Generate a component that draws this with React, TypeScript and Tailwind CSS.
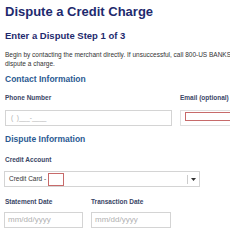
import React from "react";

export default function App() {
  return (
    <div className="w-[230px] h-[230px] overflow-hidden bg-white pl-[5px] pt-[3px]" style={{ fontFamily: '"Liberation Sans", Arial, sans-serif' }}>
      <h1 className="text-[13px] leading-[18px] font-bold text-[#1e2a6e] whitespace-nowrap">Dispute a Credit Charge</h1>
      <h2 className="mt-[9px] text-[9.5px] leading-[12px] font-bold text-[#1e2a6e] whitespace-nowrap">Enter a Dispute Step 1 of 3</h2>
      <p className="mt-[8px] text-[6.5px] leading-[9px] text-[#333] w-[250px]">
        Begin by contacting the merchant directly. If unsuccessful, call 800-US BANKS to dispute a charge.
      </p>
      <h3 className="mt-[5px] text-[8.5px] leading-[12px] font-bold text-[#2b5a92] whitespace-nowrap">Contact Information</h3>
      <div className="mt-[9px] flex gap-[8px]">
        <div className="flex flex-col w-[167px] shrink-0">
          <label className="text-[6.5px] leading-[8px] font-bold text-[#3a4666]">Phone Number</label>
          <div className="mt-[8px] h-[16px] border border-[#d4d4d4] bg-white flex items-center px-[5px] text-[6.5px] text-[#b0b0b0]">( &nbsp;)___-____</div>
        </div>
        <div className="flex flex-col w-[60px] shrink-0">
          <label className="text-[6.5px] leading-[8px] font-bold text-[#3a4666] whitespace-nowrap">Email (optional)</label>
          <div className="mt-[8px] h-[16px] border border-[#e0e0e0] pl-[4px] pt-[1px] pb-[4px]">
            <div className="h-full border border-[#c76a6a]"></div>
          </div>
        </div>
      </div>
      <h3 className="mt-[7px] text-[8.5px] leading-[12px] font-bold text-[#2b5a92] whitespace-nowrap">Dispute Information</h3>
      <label className="mt-[11px] block text-[6.5px] leading-[8px] font-bold text-[#3a4666]">Credit Account</label>
      <div className="mt-[7px] -ml-px w-[196px] h-[16px] border border-[#d4d4d4] flex items-center">
        <span className="pl-[4px] text-[6.5px] text-[#333] whitespace-nowrap">Credit Card -</span>
        <div className="ml-[2px] w-[16px] h-[13px] border border-[#c76a6a]"></div>
        <div className="flex-1"></div>
        <div className="w-px h-[9px] bg-[#ccc]"></div>
        <div className="w-[11px] flex justify-center">
          <svg width="5" height="3" viewBox="0 0 5 3"><path d="M0 0H5L2.5 3Z" fill="#333" /></svg>
        </div>
      </div>
      <div className="mt-[11px] flex gap-[8px]">
        <div className="flex flex-col w-[79px] -ml-px">
          <label className="pl-px text-[6.5px] leading-[8px] font-bold text-[#3a4666]">Statement Date</label>
          <div className="mt-[6px] h-[16px] border border-[#d4d4d4] flex items-center px-[3px] text-[8px] text-[#b0b0b0]">mm/dd/yyyy</div>
        </div>
        <div className="flex flex-col w-[80px]">
          <label className="text-[6.5px] leading-[8px] font-bold text-[#3a4666]">Transaction Date</label>
          <div className="mt-[6px] h-[16px] border border-[#d4d4d4] flex items-center px-[3px] text-[8px] text-[#b0b0b0]">mm/dd/yyyy</div>
        </div>
      </div>
    </div>
  );
}
